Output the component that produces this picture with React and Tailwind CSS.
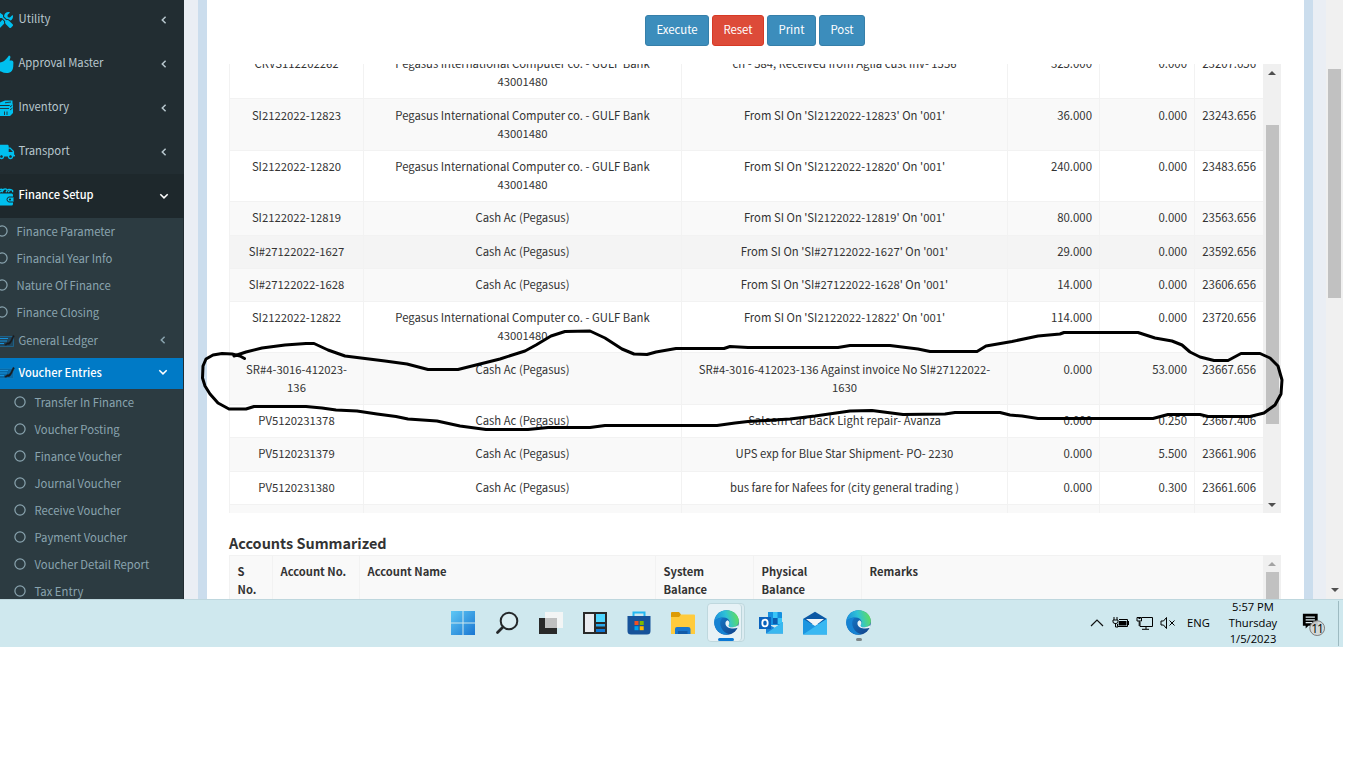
import React from "react";
import { FaTools, FaTruck } from "react-icons/fa";

const BODY = "font-['Source_Sans_Pro','Noto_Sans_CJK_SC',sans-serif]";

function Chevron({ down, color }) {
  return (
    <svg width="10" height="10" viewBox="0 0 10 10" fill="none" stroke={color} strokeWidth="1.5" className="shrink-0">
      <path d={down ? "M1.3 3.2 L5 6.9 L8.7 3.2" : "M6.6 1.8 L3.3 5 L6.6 8.2"} />
    </svg>
  );
}

function ThumbIcon() {
  return (
    <svg width="17" height="20" viewBox="0 0 17 20" fill="#00c0ef">
      <path d="M0 9 L5 8 C8 7 10 4 12 1.5 Q13.6 1.5 13.4 3.5 L12.6 6.5 H15 Q16.4 6.8 16.4 8.5 L16.2 13 Q15.8 17.5 12 18.8 Q8 19.8 4 17.5 L0 16 Z" />
    </svg>
  );
}

function RegisterIcon() {
  return (
    <svg width="16" height="18" viewBox="0 0 16 18">
      <path fill="#00c0ef" d="M3 3.5 L8 1.5 L15.5 1.5 V4.5 L14 6 H3 Z M0 7 H12 L16 4.5 V14 L13 17 H0 Z" />
      <path d="M2.5 9.5 H12 M13 8 L15.5 6 M8 3.8 L14 3 M7.5 12.5 V16 M10 12.5 V16 M13 11 L15.5 9" stroke="#222d32" strokeWidth="0.9" fill="none" />
    </svg>
  );
}

function WalletIcon() {
  return (
    <svg width="17" height="20" viewBox="0 0 17 20">
      <path fill="#00c0ef" d="M0 7.5 H14.8 Q16 7.5 16 9 V18 Q16 19.5 14.5 19.5 H0 Z" />
      <path d="M1 6.3 Q3.5 1.5 6 4.2 M5 6.3 Q7 1.2 10 3.6 M9 6.3 Q11 1.4 15.6 4.5 V6.3 M2.5 6.3 L7 3 M11 6 L13.5 4" fill="none" stroke="#00c0ef" strokeWidth="1.3" />
      <path d="M16.5 11 H12 Q10 11.4 10 13.5 Q10 15.6 12 16 H16.5" fill="#00c0ef" stroke="#1e282c" strokeWidth="1" />
      <circle cx="13" cy="13.5" r="1" fill="#1e282c" />
    </svg>
  );
}

function LedgerIcon() {
  return (
    <svg width="16" height="14" viewBox="0 0 16 14">
      <path d="M0 2.5 H14.5 V12.5 H0" fill="#12537c" fillOpacity=".45" stroke="#1684c4" strokeOpacity=".6" strokeWidth=".8" />
      <path d="M0 4.5 H9 M0 7 H8 M0 9.5 H5" stroke="#1590da" strokeWidth="1" />
      <path d="M5.5 10.8 L8.5 8.4 Q10 9.4 11.6 6.5 L14.2 1.2 L15.4 2 L12.8 7.5 Q11 11.5 8.5 10.5 Q7 12 5.5 10.8 Z" fill="#17191d" stroke="#22252a" strokeWidth=".5" />
    </svg>
  );
}

function MainItem({ icon, label, active }) {
  return (
    <div className={`flex h-[44px] shrink-0 items-center pr-[15px] ${active ? "bg-[#1e282c] text-[11.1px] font-medium text-white" : "text-[#b8c7ce]"}`}>
      <span className="-ml-[3px] flex w-[21.5px] shrink-0 items-center">{icon}</span>
      <span className="flex-1 pb-[4px] whitespace-nowrap">{label}</span>
      <Chevron down={active} color={active ? "#ffffff" : "#b8c7ce"} />
    </div>
  );
}

function SubItem({ label, deep }) {
  return (
    <div className={`flex h-[27px] shrink-0 items-center ${deep ? "pl-[14px]" : "-ml-[4px]"}`}>
      <svg width="12" height="12" viewBox="0 0 12 12" className="shrink-0">
        <circle cx="6" cy="6" r="5.1" fill="none" stroke="#8aa4af" strokeWidth="1.2" />
      </svg>
      <span className="ml-[8.5px] whitespace-nowrap">{label}</span>
    </div>
  );
}

function Sidebar() {
  return (
    <aside className="h-[599px] w-[184px] shrink-0 overflow-hidden bg-[#222d32] text-[11.3px] leading-[18px]">
      <div className="-mt-[2px] flex flex-col">
        <MainItem icon={<FaTools size={16} color="#00c0ef" />} label="Utility" />
        <MainItem icon={<ThumbIcon />} label="Approval Master" />
        <MainItem icon={<RegisterIcon />} label="Inventory" />
        <MainItem icon={<FaTruck size={18} color="#00c0ef" />} label="Transport" />
        <MainItem icon={<WalletIcon />} label="Finance Setup" active />
        <div className="mr-px h-[382px] bg-[#2c3b41] text-[#8aa4af]">
          <div className="-mt-px pb-px">
            <SubItem label="Finance Parameter" />
            <SubItem label="Financial Year Info" />
            <SubItem label="Nature Of Finance" />
            <SubItem label="Finance Closing" />
          </div>
          <div className="flex h-[32px] items-center pr-[15px] pb-[4px]">
            <span className="-ml-px w-[19.5px] pt-[2px]"><LedgerIcon /></span>
            <span className="flex-1">General Ledger</span>
            <Chevron color="#8aa4af" />
          </div>
          <div className="flex h-[31px] items-center bg-[#007ac6] pr-[15px] pb-[3px] text-[11.1px] font-medium text-white">
            <span className="-ml-px w-[19.5px] pt-[2px]"><LedgerIcon /></span>
            <span className="flex-1">Voucher Entries</span>
            <Chevron down color="#ffffff" />
          </div>
          <div className="-mt-px">
            {["Transfer In Finance", "Voucher Posting", "Finance Voucher", "Journal Voucher", "Receive Voucher", "Payment Voucher", "Voucher Detail Report", "Tax Entry"].map((t) => (
              <SubItem key={t} label={t} deep />
            ))}
          </div>
        </div>
      </div>
    </aside>
  );
}

const GULF = ["Pegasus International Computer co. - GULF Bank", "43001480"];
const CASH = ["Cash Ac (Pegasus)"];
const rows = [
  ["h-[52px] *:pt-[6.5px]", "bg-white", ["CRVS112202262"], GULF, ["ch - 584, Received from Aglia cust inv- 1556"], "325.000", "0.000", "23207.656"],
  ["h-[52px] *:pt-[6.5px]", "bg-[#f9f9f9]", ["SI2122022-12823"], GULF, ["From SI On 'SI2122022-12823' On '001'"], "36.000", "0.000", "23243.656"],
  ["h-[51px] *:pt-[5.5px]", "bg-white", ["SI2122022-12820"], GULF, ["From SI On 'SI2122022-12820' On '001'"], "240.000", "0.000", "23483.656"],
  ["h-[34px] *:pt-[5.5px]", "bg-[#f9f9f9]", ["SI2122022-12819"], CASH, ["From SI On 'SI2122022-12819' On '001'"], "80.000", "0.000", "23563.656"],
  ["h-[33px] *:pt-[5.5px]", "bg-[#f4f4f4]", ["SI#27122022-1627"], CASH, ["From SI On 'SI#27122022-1627' On '001'"], "29.000", "0.000", "23592.656"],
  ["h-[33px] *:pt-[5.5px]", "bg-[#f9f9f9]", ["SI#27122022-1628"], CASH, ["From SI On 'SI#27122022-1628' On '001'"], "14.000", "0.000", "23606.656"],
  ["h-[51px] *:pt-[5.5px]", "bg-white", ["SI2122022-12822"], GULF, ["From SI On 'SI2122022-12822' On '001'"], "114.000", "0.000", "23720.656"],
  ["h-[52px] *:pt-[6.5px]", "bg-[#f9f9f9]", ["SR#4-3016-412023-", "136"], CASH, ["SR#4-3016-412023-136 Against invoice No SI#27122022-", "1630"], "0.000", "53.000", "23667.656"],
  ["h-[33px] *:pt-[5.5px]", "bg-white", ["PV5120231378"], CASH, ["Saleem car Back Light repair- Avanza"], "0.000", "0.250", "23667.406"],
  ["h-[34px] *:pt-[5.5px]", "bg-[#f9f9f9]", ["PV5120231379"], CASH, ["UPS exp for Blue Star Shipment- PO- 2230"], "0.000", "5.500", "23661.906"],
  ["h-[33px] *:pt-[5.5px]", "bg-white", ["PV5120231380"], CASH, ["bus fare for Nafees for (city general trading )"], "0.000", "0.300", "23661.606"],
  ["h-[33px] *:pt-[5.5px]", "bg-[#f9f9f9]", [], [], [], "", "", ""],
];

function Lines({ items }) {
  return <div className="border-l border-[#f2f2f2] text-center whitespace-nowrap">{items.map((l) => <div key={l}>{l}</div>)}</div>;
}

function Num({ value }) {
  return <div className="border-l border-[#f2f2f2] pr-[7px] text-right text-[11.4px]">{value}</div>;
}

const arrow = "h-0 w-0 border-x-[4px] border-x-transparent";

function LedgerTable() {
  return (
    <div className="mt-[18px] flex h-[450px] w-[1052px] overflow-hidden">
      <div className="flex h-[450px] w-[1034px] flex-col overflow-hidden">
        <div className="-mt-[18px]">
          {rows.map(([h, bg, ref, acc, desc, a, b, c], i) => (
            <div key={i} className={`grid grid-cols-[134px_318px_326px_92px_95px_69px] border-t border-[#f2f2f2] leading-[18px] ${h} ${bg}`}>
              <Lines items={ref} />
              <Lines items={acc} />
              <Lines items={desc} />
              <Num value={a} />
              <Num value={b} />
              <Num value={c} />
            </div>
          ))}
        </div>
      </div>
      <div className="flex w-[18px] flex-col items-center bg-[#f0f0f0]">
        <div className={`mt-[7px] border-b-[4px] border-b-[#505050] ${arrow}`} />
        <div className="mt-[50px] h-[299px] w-[13px] bg-[#c1c1c1]" />
        <div className={`mt-[79px] border-t-[4px] border-t-[#505050] ${arrow}`} />
      </div>
    </div>
  );
}

function Summary() {
  const cell = "border-l border-[#f2f2f2] pl-[7.5px] pt-[6px]";
  return (
    <div className="w-[1052px]">
      <h3 className="mt-[18px] mb-px h-[23px] text-[14.45px] leading-[23px] font-bold whitespace-nowrap">Accounts Summarized</h3>
      <div className="flex h-[44px]">
        <div className="grid w-[1034px] grid-cols-[43px_87px_296px_98px_108px_1fr] border-t border-[#f2f2f2] bg-[#f9f9f9] text-[11.2px] leading-[18px] font-bold">
          <div className={cell}>S<br />No.</div>
          <div className={cell}>Account No.</div>
          <div className={cell}>Account Name</div>
          <div className={cell}>System<br />Balance</div>
          <div className={cell}>Physical<br />Balance</div>
          <div className={cell}>Remarks</div>
        </div>
        <div className="flex w-[18px] flex-col items-center bg-[#f0f0f0]">
          <div className={`mt-[7px] border-b-[4px] border-b-[#a3a3a3] ${arrow}`} />
          <div className="mt-[6px] h-[27px] w-[13px] bg-[#c1c1c1]" />
        </div>
      </div>
    </div>
  );
}

function Button({ children, red, w }) {
  return (
    <button className={`h-[31px] rounded-[3px] border pb-px text-[11.4px] text-white ${w} ${red ? "border-[#d73925] bg-[#dd4b39]" : "border-[#367fa9] bg-[#3c8dbc]"}`}>{children}</button>
  );
}

function Circled() {
  return (
    <svg className="pointer-events-none absolute top-0 left-0" width="1343" height="599" fill="none" stroke="#000" strokeWidth="3" strokeLinecap="round" strokeLinejoin="round">
      <path d="M244.5 358.5 L240 356 L232 354 L222 353.5 L213 355 L206 359 L203 366 L202.5 378 L205 386 L210 394 L218 403 L229 409 L246 409 L254 406.5 L306 406.5 L322 408 L336 410 L357 411 L377 414 L396 416.5 L408 419 L437 421 L460 426 L486 429.5 L528 429.5 L548 427.5 L590 427.5 L605 425.5 L717 425.5 L735 423 L748 421.5 L790 419 L815 416 L850 411 L872 410.5 L903 414.5 L945 414 L955 412.5 L1000 412.5 L1010 415 L1022 416 L1038 418.5 L1153 418.5 L1168 414.5 L1200 414.5 L1208 416.5 L1250 416.5 L1264 413 L1275 405 L1281 394 L1282 380 L1278 366 L1270 358 L1260 353.5 L1241 353.5 L1228 360.5 L1214 360.5 L1200 357 L1190 352 L1182 345 L1172 341 L1155 338 L1138 332.5 L1064 332.5 L1060 334 L1038 336 L1012 341.5 L986 346 L977 351.5 L930 351.5 L918 349 L890 345.5 L850 345.5 L838 347.5 L748 347.5 L730 346.5 L724 348.5 L676 348.5 L656 352 L647 354.5 L634 354 L622 349 L605 338 L590 331 L565 331.5 L551 336 L536 345 L525 351 L500 359 L458 369.5 L428 369.5 L407 364 L385 361 L345 356 L328 350 L314 343.5 L306 343.5 L285 345 L262 348 L246 352 L234 356" />
    </svg>
  );
}

function EdgeIcon({ id }) {
  return (
    <svg width="25" height="25" viewBox="0 0 24 24">
      <defs>
        <linearGradient id={`${id}a`} x1="0" y1="0.5" x2="1" y2="0.3"><stop offset="0" stopColor="#1b8fdc" /><stop offset=".5" stopColor="#2fc2d6" /><stop offset="1" stopColor="#63df55" /></linearGradient>
        <linearGradient id={`${id}b`} x1="0" y1="0" x2="1" y2="1"><stop offset="0" stopColor="#1587d8" /><stop offset="1" stopColor="#123f86" /></linearGradient>
      </defs>
      <circle cx="12" cy="12" r="11.8" fill={`url(#${id}b)`} />
      <path d="M.3 11 C1 4 6 .2 12 .2 C19 .2 23.8 5 23.8 10.5 C23.8 14.5 21 16.6 17.6 16.6 C14.6 16.6 13.4 15.2 14.4 13.8 C16 11 14 7.5 9.5 7.2 C5 7 1.5 9 .3 11Z" fill={`url(#${id}a)`} />
      <path d="M.3 11 C2 8.5 5 7.3 8.5 7.4 C6 9 5 13 7 17 C8.5 20.5 12 22.8 15 23.2 C7 25 .2 19.5 .3 11Z" fill="#1683d3" />
      <path d="M14.4 13.8 C13.4 15.2 14.6 16.6 17.6 16.6 C20 16.6 22 15.8 23.6 14 L23.2 17 C19 18.6 11.5 18 11 13.5 C10.8 11.5 11.7 10.2 13.2 9.9 C15 11 15 12.7 14.4 13.8Z" fill="#e6f3f7" />
    </svg>
  );
}

function Taskbar() {
  return (
    <footer className="relative flex h-[48px] w-[1343px] items-center border-t border-[#bed7de] bg-[#cfe8ee] text-black">
      <div className="ml-[442px] flex items-center pb-[2px]">
        <div className="flex w-[44px] justify-center pr-[3px]">
          <svg width="24" height="24" viewBox="0 0 24 24">
            <defs><linearGradient id="win" x1="0" y1="0" x2="1" y2="1"><stop offset="0" stopColor="#5fc8f5" /><stop offset="1" stopColor="#1976d2" /></linearGradient></defs>
            <path fill="url(#win)" d="M0 0H11.5V11.5H0ZM12.5 0H24V11.5H12.5ZM0 12.5H11.5V24H0ZM12.5 12.5H24V24H12.5Z" />
          </svg>
        </div>
        <div className="flex w-[44px] justify-center pr-[3px]">
          <svg width="24" height="24" viewBox="0 0 24 24" fill="none" stroke="#25282a" strokeLinecap="round">
            <circle cx="14" cy="10" r="8.3" strokeWidth="2" fill="#ffffff" fillOpacity=".25" /><path d="M8 16 L2.5 21.5" strokeWidth="2.8" />
          </svg>
        </div>
        <div className="flex w-[44px] justify-center pr-[2px]">
          <svg width="24" height="24" viewBox="0 0 24 24">
            <path d="M0 7H18V23H0Z" fill="#292929" /><path d="M6 1H24V17H6Z" fill="#f5f5f5" fillOpacity=".93" /><path d="M6 7H18V17H6Z" fill="#bfc0c0" />
          </svg>
        </div>
        <div className="flex w-[44px] justify-center pr-[2px]">
          <svg width="24" height="24" viewBox="0 0 24 24">
            <path d="M0 1H24V23H0Z" fill="#292929" /><path d="M2 3H11V21H2Z" fill="#e9ebef" /><path d="M13 3H22V11H13Z" fill="#4fd6ff" /><path d="M13 13H22V15.5H13Z" fill="#28a8ea" /><path d="M13 18H22V21H13Z" fill="#0f78d4" />
          </svg>
        </div>
        <div className="flex w-[44px] justify-center pr-[3px]">
          <svg width="24" height="24" viewBox="0 0 24 24">
            <path d="M6.5 6V1.5H17.5V6" fill="none" stroke="#23b8f2" strokeWidth="2" />
            <path d="M.5 5H23.5V20Q23.5 23.5 20 23.5H4Q.5 23.5 .5 20Z" fill="#17539a" />
            <path d="M7.5 10H11.5V14H7.5Z" fill="#f25022" /><path d="M12.7 10H16.7V14H12.7Z" fill="#7fba00" /><path d="M7.5 15.2H11.5V19.2H7.5Z" fill="#00a4ef" /><path d="M12.7 15.2H16.7V19.2H12.7Z" fill="#ffb900" />
          </svg>
        </div>
        <div className="flex w-[44px] justify-center pr-[2px]">
          <svg width="24" height="24" viewBox="0 0 24 24">
            <path d="M0 2Q0 1 1 1H8L10 3.5V7H0Z" fill="#dd9b06" /><path d="M0 6H8L10 3.5H23Q24 3.5 24 4.5V23H0Z" fill="#ffcb3d" /><path d="M4 23V18Q4 16 6 16H17Q19.5 16 19.5 18V23Z" fill="#1976cc" /><path d="M7 20H16.5V23H7Z" fill="#125ba8" />
          </svg>
        </div>
        <div className="mr-[-1px] ml-[1px] flex h-[39px] w-[38px] items-start rounded-[4px] border border-[#bfd8de] bg-[#dcecf1]">
          <div className="relative flex h-[37px] w-[34px] justify-center rounded-[4px] border-r border-[#bdd5db] bg-[#e7f2f6] pt-[6px] pl-[3px]">
            <EdgeIcon id="e1" />
            <span className="absolute bottom-[0px] left-[10px] h-[3px] w-[16px] rounded-full bg-[#0b78d4]" />
          </div>
        </div>
        <div className="ml-[2px] flex w-[50px] justify-center pl-[1px]">
          <svg width="25" height="24" viewBox="0 0 25 24">
            <path d="M9 1H22Q23 1 23 2V14H9Z" fill="#1490df" /><path d="M14 1H18.5V7H14ZM18.5 7H23V13H18.5Z" fill="#38c5f7" /><path d="M14 7H18.5V13H14Z" fill="#0a5cb0" />
            <path d="M7 12L16 17L24 11V22.5H7Z" fill="#1a85d8" /><path d="M7 22.5L24 11V22.5Z" fill="#3ab8ef" />
            <path d="M0 6H12V18H0Z" fill="#0a62bd" /><ellipse cx="6" cy="12" rx="2.7" ry="3.4" fill="none" stroke="#fff" strokeWidth="1.8" />
          </svg>
        </div>
        <div className="flex w-[40px] justify-center pr-[2px]">
          <svg width="24" height="24" viewBox="0 0 24 24">
            <path d="M0 8L12 .8L24 8V13H0Z" fill="#0c58a4" /><path d="M3 8H21L12 15Z" fill="#f3f6f8" /><path d="M0 7.8L12 15L24 7.8V23.5H0Z" fill="#1c96e0" /><path d="M0 23.5L24 7.8V23.5Z" fill="#39b8f2" />
          </svg>
        </div>
        <div className="relative flex w-[48px] justify-center pr-[3px]">
          <EdgeIcon id="e2" />
          <span className="absolute -bottom-[6px] h-[3px] w-[6px] rounded-full bg-[#7c8588]" />
        </div>
      </div>
      <div className="ml-auto flex h-full items-center pb-[2px] font-['Segoe_UI','Open_Sans',sans-serif] text-[11.2px] leading-[16px]">
        <svg width="14" height="12" viewBox="0 0 14 12" fill="none" stroke="#111" strokeWidth="1.2"><path d="M1 9L7 3L13 9" /></svg>
        <svg className="ml-[8px]" width="18" height="14" viewBox="0 0 18 14">
          <path d="M2 1V4M5 1V4M1 4H6V6Q6 7.5 3.5 7.5Q1 7.5 1 6ZM3.5 7V11H6" fill="none" stroke="#000" /><path d="M7 3.5H15.5V10.5H5.5V8" fill="none" stroke="#000" /><path d="M7 5H14.5V9.5H6.5ZM15.5 5H17V9H15.5Z" />
        </svg>
        <svg className="ml-[6px]" width="17" height="14" viewBox="0 0 17 14" fill="none" stroke="#000">
          <path d="M6 1.5H16.5V10.5H4V6M10 10.5V13M6 13.3H13M1 1.5H5.5V5H1ZM3.2 5V10" /><path d="M2.5 2.5H4.5" />
        </svg>
        <svg className="ml-[7px]" width="16" height="14" viewBox="0 0 16 14" fill="none" stroke="#000"><path d="M1 5H3.5L6.5 1.5V12.5L3.5 9H1ZM9.5 4.5L14.5 9.5M14.5 4.5L9.5 9.5" /></svg>
        <span className="ml-[11px] w-[24px]">ENG</span>
        <div className="ml-[12px] w-[60px] text-center">5:57 PM<br />Thursday<br />1/5/2023</div>
        <div className="relative mr-[12px] ml-[18px] h-[26px] w-[25px]">
          <svg width="25" height="26" viewBox="0 0 25 26" className="pt-[2px]">
            <path d="M1 2H17V15H7L4 18V15H1Z" /><path d="M4 5.5H14M4 8.5H14M4 11.5H11" stroke="#dcecf0" strokeWidth="1.2" />
            <circle cx="16.5" cy="17.5" r="8" fill="#d2d6d6" fillOpacity=".92" stroke="#777" />
          </svg>
          <span className="absolute top-[11px] left-[9px] w-[14px] text-center text-[12px] tracking-[-1px]">11</span>
        </div>
        <div className="mr-[4px] -mb-[2px] h-full w-px bg-[#9dbac1]" />
      </div>
    </footer>
  );
}

export default function App() {
  return (
    <div className={`h-[768px] w-[1366px] overflow-hidden bg-white ${BODY}`}>
      <div className="relative flex h-[599px] w-[1343px] overflow-hidden">
        <Sidebar />
        <main className="flex flex-1 bg-[#eaeef4] pr-[13px] pl-[14px]">
          <section className="flex h-full flex-1 flex-col border-x-[9px] border-[#cbdded] bg-white pl-[22px] text-[11.3px] text-[#333]">
            <div className="mt-[15px] flex h-[31px] w-[1052px] justify-center gap-[3px]">
              <Button w="w-[64px]">Execute</Button>
              <Button w="w-[52px]" red>Reset</Button>
              <Button w="w-[49px]">Print</Button>
              <Button w="w-[46px]">Post</Button>
            </div>
            <LedgerTable />
            <Summary />
          </section>
        </main>
        <div className="flex w-[17px] flex-col items-center bg-[#f0f0f0]">
          <div className="mt-[69px] h-[229px] w-[13px] bg-[#c1c1c1]" />
          <div className={`mt-[290px] border-t-[4px] border-t-[#505050] ${arrow}`} />
        </div>
        <Circled />
      </div>
      <Taskbar />
    </div>
  );
}
